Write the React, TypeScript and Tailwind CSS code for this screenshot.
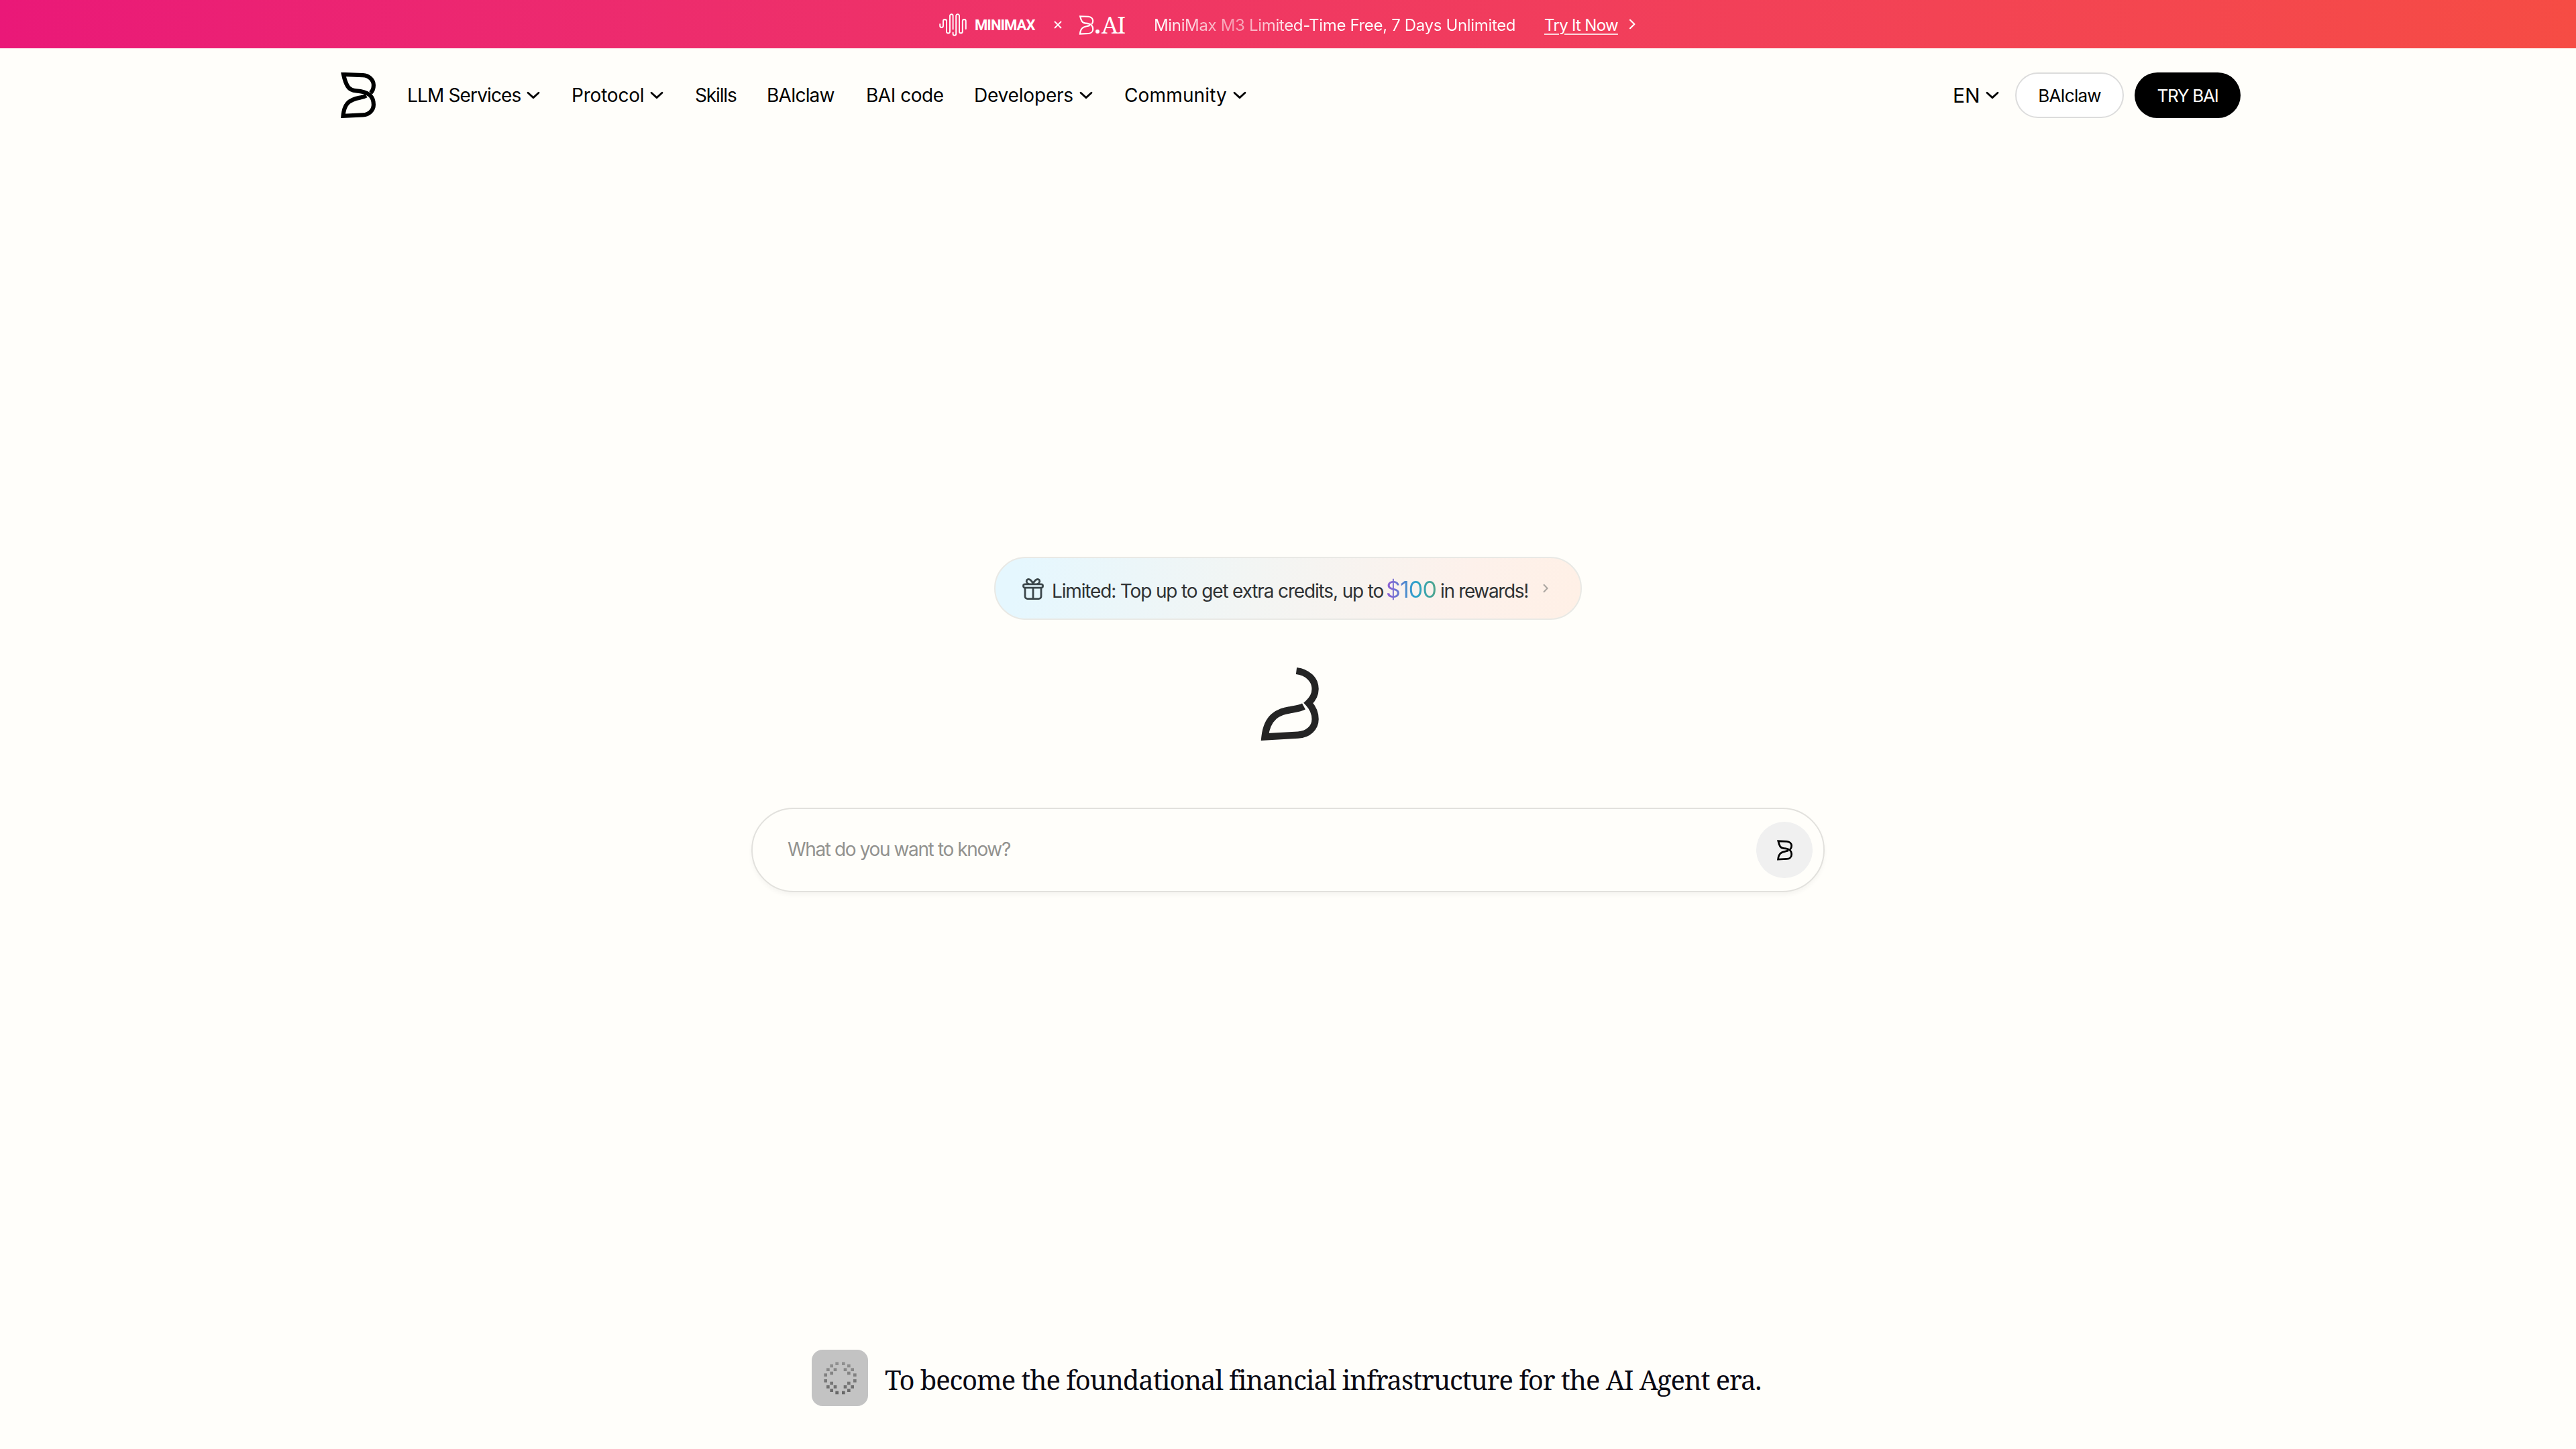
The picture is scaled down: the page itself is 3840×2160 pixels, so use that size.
import React from 'react';

interface NavItem {
  label: string;
  className: string;
  hasMenu?: boolean;
}

const NAV_ITEMS: NavItem[] = [
  { label: 'LLM Services', className: 'w-[170px] tracking-[-0.85px]', hasMenu: true },
  { label: 'Protocol', className: 'w-[109px] tracking-[-0.2px]', hasMenu: true },
  { label: 'Skills', className: 'w-[62px] tracking-[-1.15px]' },
  { label: 'BAIclaw', className: 'w-[103px] tracking-[-0.88px]' },
  { label: 'BAI code', className: 'w-[116px] tracking-[-0.45px]' },
  { label: 'Developers', className: 'w-[149px] tracking-[-0.19px]', hasMenu: true },
  { label: 'Community', className: 'w-[154px] tracking-[0.15px]', hasMenu: true },
];

// Top-left corners of the loader's pixels, on a 252 grid
const LOADER_PIXELS: [number, number][] = [
  [106, 55], [135, 55],
  [82, 65], [159, 65],
  [66, 82], [98, 82], [143, 82], [175, 82],
  [82, 98], [159, 98],
  [55, 106], [186, 106],
  [55, 132], [186, 132],
  [82, 143], [159, 143],
  [66, 159], [98, 159], [143, 159], [175, 159],
  [82, 175], [159, 175],
  [106, 185], [135, 185],
];

const BaiLogo: React.FC<{ className?: string; strokeWidth?: number }> = ({ className, strokeWidth = 6.2 }) => (
  <svg className={className} viewBox="0 0 52 68" fill="none" stroke="currentColor" strokeWidth={strokeWidth} strokeMiterlimit={10}>
    <path d="M44.5 30.5C47.5 27.5 48.9 23.5 48.9 19C48.9 11 42 4.6 33 4.2L4 3C5.3 9 7.2 16 10.5 21C13.5 25.5 17 27 23 27.4C32 28 38 29.5 43 33.5C47 37 48.9 41.5 48.9 48C48.9 56.5 42 62.8 33 63.3L3.5 64.8C4.2 57 5.5 51 10 46C16 39.5 24 38.5 30 37.3C33 36.7 35.5 36 38 34.6" />
  </svg>
);

const ChevronDown: React.FC = () => (
  <svg className="w-6 h-6 shrink-0" viewBox="0 0 24 24" fill="none" stroke="currentColor" strokeWidth="2.8" strokeLinecap="round" strokeLinejoin="round">
    <path d="M4 8.2L12 15.6L20 8.2" />
  </svg>
);

const MinimaxIcon: React.FC = () => (
  <svg className="w-[41px] h-[34px] shrink-0" viewBox="0 0 41 34" fill="none" stroke="currentColor" strokeWidth="1.9" strokeLinecap="round">
    <path d="M1.2 16V18.5a2.4 2.4 0 0 0 4.8 0V11.5a2.5 2.5 0 0 1 5 0V27a2.5 2.5 0 0 0 5 0V3.5a2.3 2.3 0 0 1 4.6 0V23.5" />
    <path d="M20.6 28.5V30.5a2.3 2.3 0 0 0 4.6 0V3.5a2.4 2.4 0 0 1 4.8 0V27a2.4 2.4 0 0 0 4.8 0V11.5a2.5 2.5 0 0 1 5 0V23" />
  </svg>
);

const GiftIcon: React.FC = () => (
  <svg className="w-8 h-8 shrink-0" viewBox="0 0 32 32" fill="none" stroke="currentColor" strokeWidth="2.8" strokeLinecap="round" strokeLinejoin="round">
    <rect x="1.4" y="8.8" width="29.2" height="5.4" rx="2.7" />
    <path d="M4 14.4V27a3.6 3.6 0 0 0 3.6 3.6H24.4A3.6 3.6 0 0 0 28 27V14.4" />
    <path d="M16 14.4V30.4" />
    <path d="M16 8.6C14.6 3.4 10.6 0.6 7.8 1.8C5.2 3.2 6 7.4 9.4 8.6" />
    <path d="M16 8.6C17.4 3.4 21.4 0.6 24.2 1.8C26.8 3.2 26 7.4 22.6 8.6" />
  </svg>
);

const PromoBanner: React.FC = () => (
  <div className="flex items-center justify-center h-[72px] pt-[2px] pr-[2px] bg-linear-to-r from-[#ea1878] to-[#f64c44] text-white whitespace-nowrap">
    <MinimaxIcon />
    <span className="ml-3 w-[91px] font-['Roboto',sans-serif] font-bold text-[22px] tracking-[-0.9px]">MINIMAX</span>
    <svg className="ml-[27px] w-3 h-3" viewBox="0 0 12 12" fill="none" stroke="currentColor" strokeWidth="1.8">
      <path d="M1 1L11 11M11 1L1 11" />
    </svg>
    <BaiLogo className="ml-[25px] w-[23px] h-[29px]" strokeWidth={5} />
    <span className="ml-0.5 mt-5 w-1.5 h-1.5 rounded-full bg-white" />
    <span className="ml-[3px] w-9 font-['Noto_Serif',serif] text-[35px] leading-[40px] tracking-[-1.5px]">AI</span>
    <span className="ml-[42px] pt-px w-[540px] text-[24px] tracking-[-0.34px] text-transparent bg-clip-text bg-[linear-gradient(90deg,#fff_2%,rgba(255,255,255,0.5)_22%,#fff_42%)]">
      MiniMax M3 Limited-Time Free, 7 Days Unlimited
    </span>
    <a className="ml-[42px] pt-px w-[111px] text-[24px] tracking-[-0.7px] underline underline-offset-4 decoration-2 decoration-white/80">Try It Now</a>
    <svg className="ml-[15px] w-[10px] h-4 -mt-0.5" viewBox="0 0 10 16" fill="none" stroke="currentColor" strokeWidth="2.2" strokeLinecap="round" strokeLinejoin="round">
      <path d="M2 1.8L8.4 8L2 14.2" />
    </svg>
  </div>
);

const Header: React.FC = () => (
  <header className="flex items-center h-[140px] pl-[508px] pr-[500px] text-black">
    <BaiLogo className="w-[52px] h-[68px]" />
    <nav className="flex items-center gap-[45px] ml-[47px] text-[28px] whitespace-nowrap">
      {NAV_ITEMS.map(item => (
        <div key={item.label} className="flex items-center gap-1.5">
          <span className={item.className}>{item.label}</span>
          {item.hasMenu && <ChevronDown />}
        </div>
      ))}
    </nav>
    <div className="flex items-center ml-auto whitespace-nowrap">
      <div className="flex items-center gap-1.5 mr-[22px]">
        <span className="w-[41px] text-[30px]">EN</span>
        <ChevronDown />
      </div>
      <button className="w-[162px] h-[68px] rounded-full border-2 border-[#dcdcdc] bg-white text-[26px] tracking-[-0.75px]">
        BAIclaw
      </button>
      <button className="ml-4 w-[158px] h-[68px] rounded-full bg-black text-white text-[26px] tracking-[-1.23px]">
        TRY BAI
      </button>
    </div>
  </header>
);

export default function App() {
  return (
    <div className="flex flex-col min-h-[2160px] bg-[#fffefa] font-['Inter',sans-serif]">
      <PromoBanner />
      <Header />

      <main className="flex flex-col items-center pt-[618px]">
        {/* Reward pill */}
        <div className="flex items-center w-[876px] h-[94px] pl-10 pt-[2px] rounded-full border-2 border-[#e9e9e5] bg-[linear-gradient(100deg,#e5f7fe_4%,#f3f5f3_45%,#fdf1eb_80%,#fff0e6_100%)] text-[#2f3234] whitespace-nowrap">
          <span className="text-[#3c474b]"><GiftIcon /></span>
          <div className="flex items-baseline ml-3 text-[28px]">
            <span className="w-[498px] tracking-[-1.15px]">Limited: Top up to get extra credits, up to</span>
            <span className="w-[81px] text-[34px] tracking-[-0.9px] text-transparent bg-clip-text bg-[linear-gradient(90deg,#8a62d4_5%,#29a3cb_55%,#4fa58a_92%)]">$100</span>
            <span className="w-[134px] tracking-[-1.35px]">in rewards!</span>
          </div>
          <svg className="ml-[19px] -mt-0.5 w-2 h-3.5" viewBox="0 0 8 14" fill="none" stroke="#aaa5a0" strokeWidth="2">
            <path d="M1 1.2L6.6 7L1 12.8" />
          </svg>
        </div>

        <svg className="mt-14 w-[120px] h-[140px]" viewBox="0 0 120 140" fill="none" stroke="#242424" strokeWidth="10.3">
          <path d="M72.5 20C89 22 100.6 33 100.6 47C100.6 55 97 62 90.5 68C97 75 100.6 83 100.6 92C100.6 105 90 114.8 75 115.6L25.5 118.4C27 105 31 95 39 88C48 80.5 56 79.5 64 78C72 76.8 78 76 83.5 73" />
        </svg>

        {/* Prompt box */}
        <div className="flex items-center justify-between w-[1600px] h-[126px] mt-[84px] pl-[52px] pr-4 rounded-full border-2 border-[#e2e1dd] bg-[#fffefa] shadow-[0_4px_6px_rgba(0,0,0,0.04)]">
          <span className="pb-0.5 text-[28px] tracking-[-1.38px] text-[#92928f]">What do you want to know?</span>
          <button className="flex items-center justify-center w-[84px] h-[84px] rounded-full bg-[#f0f0f0]">
            <BaiLogo className="w-[23px] h-[31px]" />
          </button>
        </div>

        {/* Tagline */}
        <div className="flex items-center mt-[682px]">
          <svg className="w-[84px] h-[84px] rounded-2xl bg-[#c3c3c3]" viewBox="0 0 252 252">
            <defs>
              <linearGradient id="loader" gradientUnits="userSpaceOnUse" x1="0" y1="55" x2="0" y2="199">
                <stop offset="0" stopColor="#929292" />
                <stop offset="1" stopColor="#666666" />
              </linearGradient>
            </defs>
            {LOADER_PIXELS.map(([x, y]) => (
              <rect key={`${x}-${y}`} x={x} y={y} width="14" height="14" fill="url(#loader)" />
            ))}
          </svg>
          <p className="ml-[25px] pt-1.5 w-[1311px] font-['Noto_Serif',serif] text-[40px] leading-[56px] tracking-[-1.1px] text-[#0a0a14] whitespace-nowrap">
            To become the foundational financial infrastructure for the AI Agent era.
          </p>
        </div>
      </main>
    </div>
  );
}
